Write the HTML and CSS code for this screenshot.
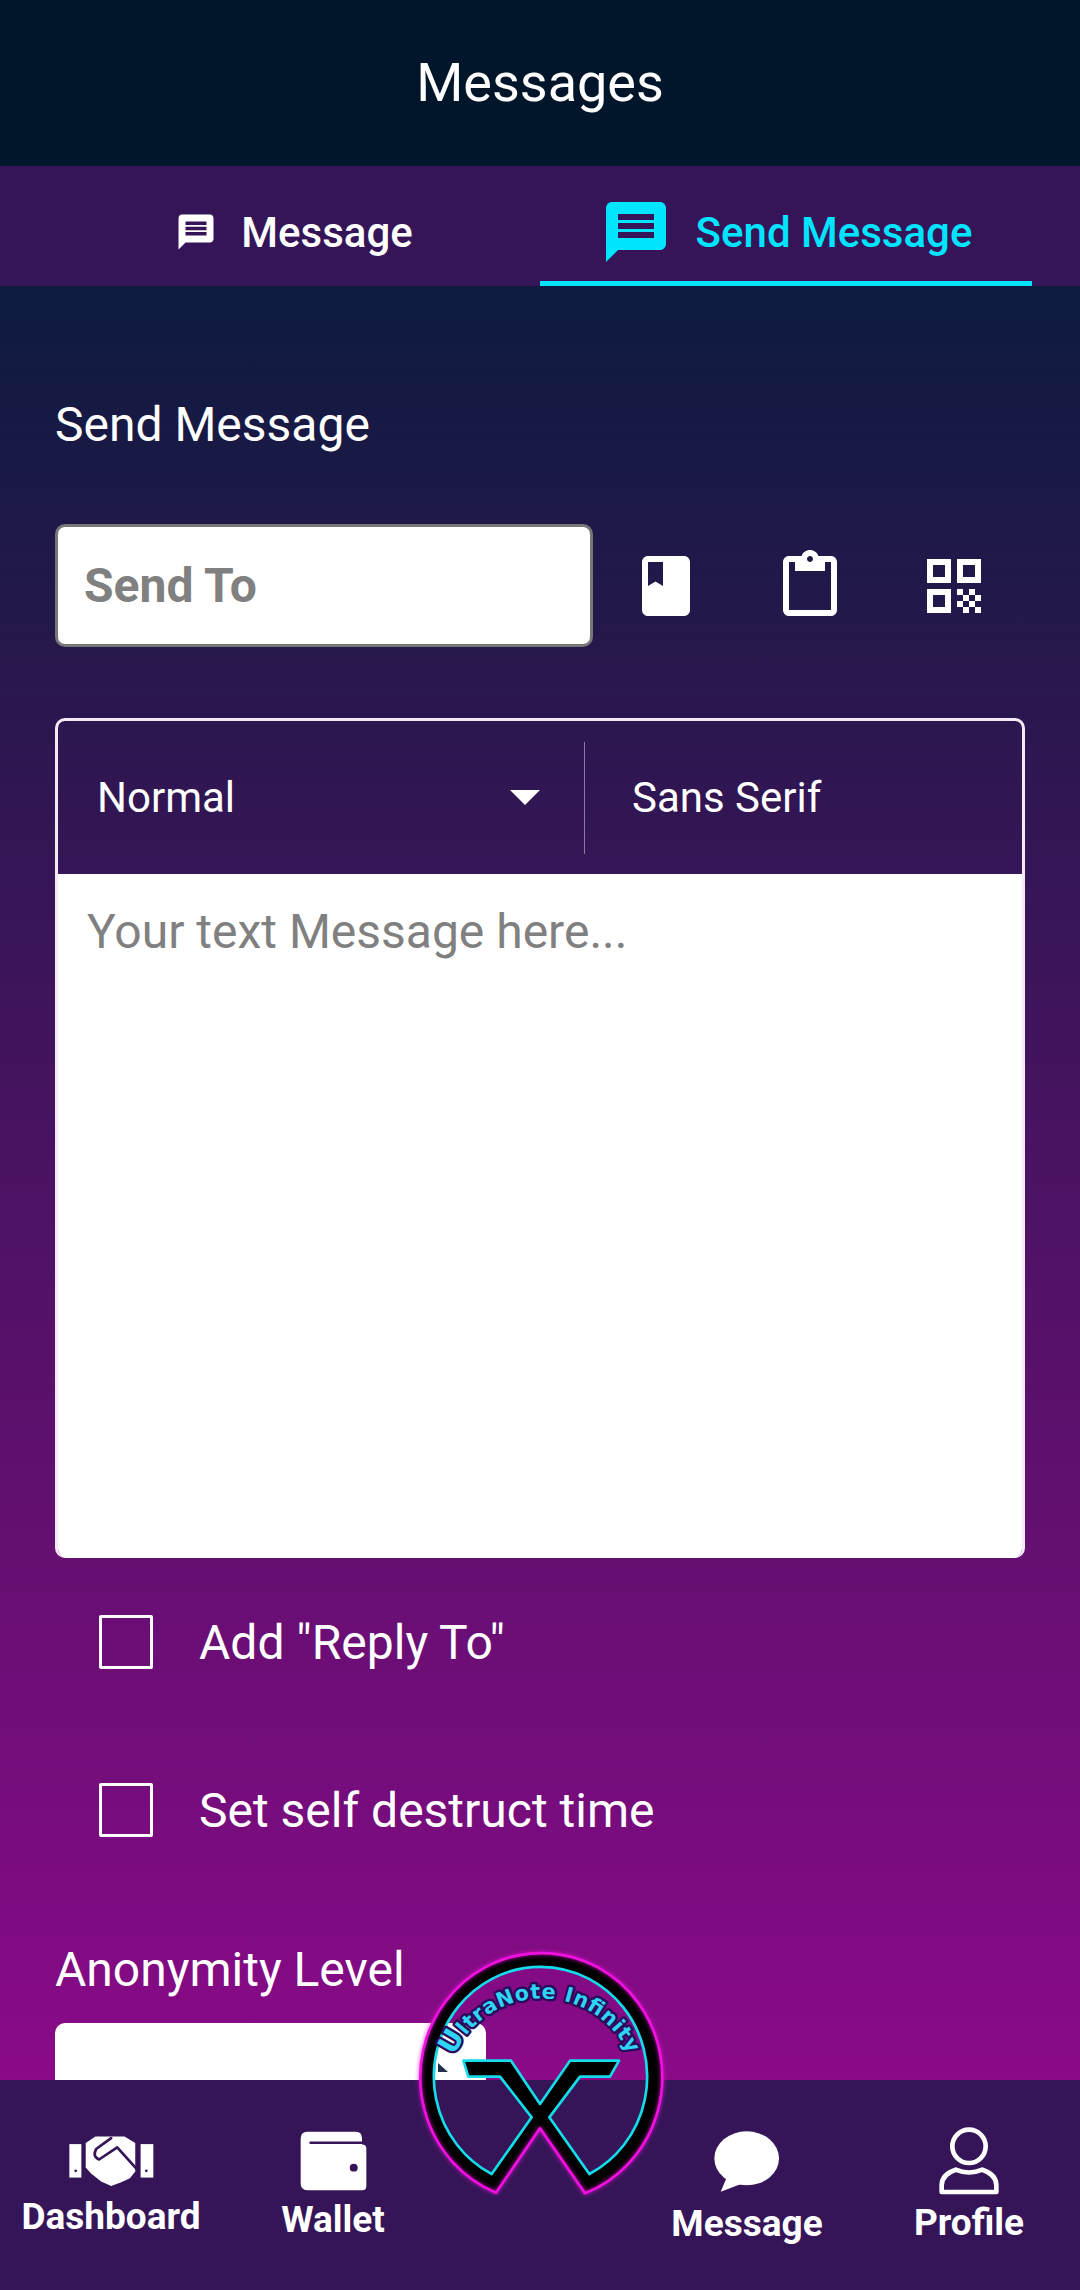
FILE: index.html
```html
<!DOCTYPE html>
<html lang="en">
<head>
<meta charset="utf-8">
<title>Messages</title>
<link rel="stylesheet" href="styles.css">
</head>
<body>
<div class="app">
  <header class="top"><h1 class="title">Messages</h1></header>
  <nav class="tabs">
    <div class="tab">
      <svg class="tab-ico-s" viewBox="0 0 24 24"><path class="w" d="M20 2H4c-1.1 0-1.99.9-1.99 2L2 22l4-4h14c1.1 0 2-.9 2-2V4c0-1.1-.9-2-2-2zm-2 12H6v-2h12v2zm0-3H6V9h12v2zm0-3H6V6h12v2z"/></svg>
      <span>Message</span>
    </div>
    <div class="tab active">
      <svg class="tab-ico-l" viewBox="0 0 24 24"><path class="c" d="M20 2H4c-1.1 0-1.99.9-1.99 2L2 22l4-4h14c1.1 0 2-.9 2-2V4c0-1.1-.9-2-2-2zm-2 12H6v-2h12v2zm0-3H6V9h12v2zm0-3H6V6h12v2z"/></svg>
      <span>Send Message</span>
    </div>
  </nav>
  <main class="main">
    <h2 class="heading">Send Message</h2>
    <div class="send-row">
      <div class="send-input">Send To</div>
      <div class="send-icons">
        <svg class="ico72" viewBox="0 0 24 24"><path class="w" d="M18 2H6c-1.1 0-2 .9-2 2v16c0 1.1.9 2 2 2h12c1.1 0 2-.9 2-2V4c0-1.1-.9-2-2-2zM6 4h5v8l-2.5-1.5L6 12V4z"/></svg>
        <svg class="ico72" viewBox="0 0 24 24"><path class="w" d="M19 2h-4.18C14.4.84 13.3 0 12 0c-1.3 0-2.4.84-2.82 2H5c-1.1 0-2 .9-2 2v16c0 1.1.9 2 2 2h14c1.1 0 2-.9 2-2V4c0-1.1-.9-2-2-2zm-7 0c.55 0 1 .45 1 1s-.45 1-1 1-1-.45-1-1 .45-1 1-1zm7 18H5V4h2v3h10V4h2v16z"/></svg>
        <svg class="ico72" viewBox="0 0 24 24"><path class="w" d="M3 11h8V3H3v8zm2-6h4v4H5V5zM3 21h8v-8H3v8zm2-6h4v4H5v-4zM13 3v8h8V3h-8zm6 6h-4V5h4v4zM19 19h2v2h-2zM13 13h2v2h-2zM15 15h2v2h-2zM13 17h2v2h-2zM15 19h2v2h-2zM17 17h2v2h-2zM17 13h2v2h-2zM19 15h2v2h-2z"/></svg>
      </div>
    </div>
    <section class="editor">
      <div class="toolbar">
        <div class="picker picker-size"><span>Normal</span><i class="caret"></i></div>
        <div class="picker picker-font"><span>Sans Serif</span></div>
      </div>
      <div class="editor-body">Your text Message here...</div>
    </section>
    <div class="check-row"><i class="box"></i><span>Add "Reply To"</span></div>
    <div class="check-row"><i class="box"></i><span>Set self destruct time</span></div>
    <div class="anon-label">Anonymity Level</div>
    <div class="anon-select"><i class="anon-arrow"></i></div>
  </main>
  <footer class="bottom">
    <div class="item item-dash">
      <svg class="ni-hand" viewBox="203 218 260 158">
        <rect class="w" x="207" y="248" width="36" height="100"/>
        <rect class="w" x="420" y="248" width="38" height="100"/>
        <circle class="d" cx="226" cy="328" r="4"/>
        <circle class="d" cx="437" cy="328" r="4"/>
        <path class="w" d="M256 245L285 225H372L404 245V330L388 350L362 362L332 373L302 360L272 336L256 318Z"/>
        <path class="dl" d="M332 230L288 262Q274 284 296 294L350 258L408 322"/>
      </svg>
      <span>Dashboard</span>
    </div>
    <div class="item item-wallet">
      <svg class="ni-wallet" viewBox="898 210 202 180">
        <path class="w" d="M920 212H1067Q1085 212 1085 232V250Q1098 250 1098 262V375Q1098 388 1085 388H920Q900 388 900 368V232Q900 212 920 212Z"/>
        <path class="dl" d="M930 245H1090"/>
        <circle class="d" cx="1060" cy="320" r="12"/>
      </svg>
      <span>Wallet</span>
    </div>
    <div class="item item-spacer"></div>
    <div class="item item-msg">
      <svg class="ni-chat" viewBox="222 210 198 186">
        <ellipse class="w" cx="320" cy="292" rx="97" ry="81"/>
        <path class="w" d="M262 345L242 392L305 368Z"/>
      </svg>
      <span>Message</span>
    </div>
    <div class="item item-prof">
      <svg class="ni-prof" viewBox="895 200 180 204">
        <circle class="wl" cx="985" cy="258" r="50"/>
        <path class="wl" d="M903 395V375Q903 342 945 328Q985 345 1025 328Q1067 342 1067 375V395Z"/>
      </svg>
      <span>Profile</span>
    </div>
  </footer>
  <svg class="logo" viewBox="0 0 960 900" aria-label="UltraNote Infinity">
    <path class="logo-ring" fill-rule="evenodd" d="M348 818A363 373 0 1 1 615 820L480 625ZM335 762L455 592L360 470H265L250 422H393L480 552L570 422H717L690 470H600L508 592L628 762A320 329 0 1 0 335 762Z"/>
    <path class="logo-outer" d="M348 818A363 373 0 1 1 615 820L480 625Z"/>
    <path class="logo-inner" d="M335 762L455 592L360 470H265L250 422H393L480 552L570 422H717L690 470H600L508 592L628 762A320 329 0 1 0 335 762Z"/>
    <path id="logoArc" class="logo-arc" d="M222 408A287 287 0 0 1 745 400"/>
    <text class="logo-text"><textPath href="#logoArc" textLength="660"><tspan class="logo-u">U</tspan>ltraNote Infinity</textPath></text>
  </svg>
</div>
</body>
</html>
```
FILE: styles.css
```css
* { box-sizing: border-box; }
html, body { margin: 0; padding: 0; }
body { font-family: Roboto, "Liberation Sans", sans-serif; color: #fff; background: #01162a; }
.app { position: relative; width: 1080px; height: 2290px; display: flex; flex-direction: column; overflow: hidden; }

.w { fill: #fff; }
.c { fill: #00e5ff; }
.d { fill: #351558; }
.dl { fill: none; stroke: #351558; stroke-width: 8; stroke-linecap: round; stroke-linejoin: round; }
.wl { fill: none; stroke: #fff; stroke-width: 14; stroke-linejoin: round; }

.top { flex: none; height: 166px; background: #01162a; display: flex; align-items: center; justify-content: center; }
.title { margin: 0; font-size: 54px; font-weight: 400; line-height: 60px; }

.tabs { flex: none; height: 120px; padding: 0 48px; background: #351558; display: grid; grid-template-columns: 1fr 1fr; }
.tab { display: flex; align-items: center; justify-content: center; padding-top: 12px; font-size: 42px; font-weight: 500; gap: 24px; }
.tab.active { color: #00e5ff; padding-top: 17px; border-bottom: 5px solid #00e5ff; }
.tab-ico-s { width: 42px; height: 42px; }
.tab-ico-l { width: 72px; height: 72px; }

.main { flex: 1; min-height: 0; overflow: hidden; padding: 109px 55px 0; background: linear-gradient(180deg, #0d1b3e 0%, #8a0a88 100%); }
.heading { margin: 0 0 69px; font-size: 48px; font-weight: 400; line-height: 60px; }

.send-row { display: flex; align-items: flex-start; height: 123px; margin-bottom: 71px; }
.send-input { width: 538px; height: 123px; padding-left: 26px; background: #fff; border: 3px solid #777; border-radius: 10px; display: flex; align-items: center; color: #808080; font-size: 48px; font-weight: 700; }
.send-icons { display: flex; gap: 72px; margin: 26px 0 0 37px; }
.ico72 { width: 72px; height: 72px; display: block; }

.editor { height: 840px; display: flex; flex-direction: column; border-radius: 10px; overflow: hidden; border: 3px solid #f4e9f7; border-bottom: 0; }
.toolbar { flex: none; height: 153px; display: flex; align-items: center; }
.picker { height: 112px; display: flex; align-items: center; font-size: 42px; }
.picker-size { width: 527px; padding: 0 44px 0 39px; justify-content: space-between; border-right: 1px solid #8a7a9c; }
.picker-font { padding-left: 47px; }
.caret { width: 30px; height: 15px; background: #fff; clip-path: polygon(0 0, 100% 0, 50% 100%); }
.editor-body { flex: 1; background: #fff; color: #808080; font-size: 48px; line-height: 54px; padding: 31px 29px; }

.check-row { height: 168px; padding-left: 44px; display: flex; align-items: center; gap: 46px; font-size: 48px; }
.box { width: 54px; height: 54px; border: 3px solid #fff; border-radius: 2px; }

.anon-label { margin: 46px 0 23px; font-size: 48px; line-height: 60px; }
.anon-select { width: 431px; height: 120px; padding: 40px 0 0 383px; background: #fff; border-radius: 10px; }
.anon-arrow { display: block; width: 10px; height: 9px; background: #22304a; clip-path: polygon(0 0, 100% 100%, 0 100%); }

.bottom { flex: none; height: 210px; background: #351558; display: grid; grid-template-columns: 222px 222px 192px 222px 222px; font-size: 37px; font-weight: 700; }
.item { display: flex; flex-direction: column; align-items: center; }
.item span { line-height: 44px; }
.item svg { display: block; flex: none; }
.item-dash { padding-top: 54px; }
.ni-hand { width: 87px; height: 53px; margin-bottom: 8px; }
.item-wallet { padding-top: 51px; }
.ni-wallet { width: 67px; height: 60px; margin-bottom: 7px; }
.item-msg { padding-top: 51px; }
.ni-chat { width: 66px; height: 62px; margin-bottom: 9px; }
.item-prof { padding-top: 47px; }
.ni-prof { width: 60px; height: 68px; margin-bottom: 6px; }

.logo { position: absolute; left: 380px; top: 1920px; width: 320px; height: 300px; overflow: visible; }
.logo-ring { fill: #000; }
.logo-outer { fill: none; stroke: #f010e0; stroke-width: 8; stroke-linejoin: round; filter: drop-shadow(0 0 7px #e010d0); }
.logo-inner { fill: none; stroke: #14dcea; stroke-width: 8; stroke-linejoin: round; }
.logo-arc { fill: none; }
.logo-text { font-family: "DejaVu Sans", sans-serif; font-weight: 700; font-size: 62px; fill: #2fd4f4; stroke: #2a0a5a; stroke-width: 14; paint-order: stroke; stroke-linejoin: round; }
.logo-u { font-size: 84px; }
```
